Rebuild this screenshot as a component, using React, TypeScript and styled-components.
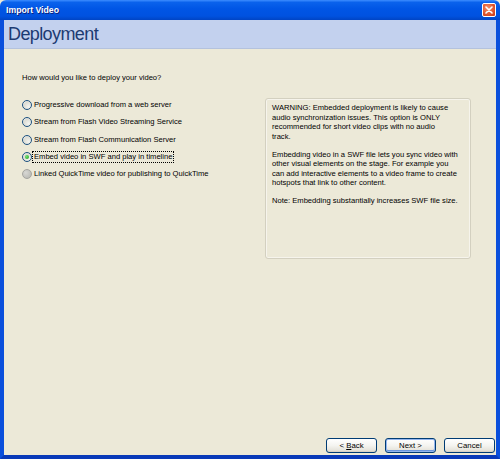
import * as React from 'react'
import styled, { createGlobalStyle } from 'styled-components'

const GlobalStyle = createGlobalStyle`
  html, body {
    margin: 0;
    padding: 0;
    background: #ece9d8;
  }
`

const uiFont = `'Liberation Sans', Arial, sans-serif`

const Window = styled.div`
  width: 500px;
  height: 459px;
  display: flex;
  flex-direction: column;
  font-family: ${uiFont};
  font-size: 7.6px;
  color: #000;
  overflow: hidden;
`

const TitleBar = styled.div`
  height: 20px;
  flex: 0 0 20px;
  display: flex;
  align-items: center;
  justify-content: space-between;
  padding: 0 4px 0 6px;
  background: linear-gradient(
    #3d8dff 0,
    #0a62ec 12%,
    #0055e5 45%,
    #0052e0 80%,
    #0044c4 100%
  );
  border-radius: 6px 6px 0 0;
`

const Title = styled.span`
  color: #fff;
  font-family: ${uiFont};
  font-weight: bold;
  font-size: 8.7px;
  text-shadow: 1px 1px 0 #0a1f7a;
`

const CloseButton = styled.div`
  width: 14px;
  height: 14px;
  border: 1px solid #fff;
  border-radius: 2px;
  background: radial-gradient(circle at 40% 35%, #f2906c, #e0542b 60%, #c2381a);
  display: flex;
  align-items: center;
  justify-content: center;
  box-sizing: border-box;
`

const Frame = styled.div`
  flex: 1;
  display: flex;
  flex-direction: column;
  border-left: 4px solid #0a4fdc;
  border-right: 4px solid #0a4fdc;
  border-bottom: 4px solid #0839b8;
`

const Header = styled.div`
  height: 28px;
  flex: 0 0 28px;
  display: flex;
  align-items: center;
  padding-left: 4px;
  background: #c3d1ee;
  border-bottom: 1px solid #b4c2dd;
`

const HeaderTitle = styled.h1`
  margin: 0;
  font-family: ${uiFont};
  font-weight: normal;
  font-size: 18px;
  letter-spacing: -0.6px;
  color: #1d3b72;
`

const Body = styled.div`
  flex: 1;
  display: flex;
  flex-direction: column;
  background: #ece9d8;
  padding: 24px 1px 2px 18px;
`

const Question = styled.p`
  margin: 0 0 15px 0;
  line-height: 10px;
`

const Content = styled.div`
  flex: 1;
  display: flex;
  align-items: flex-start;
`

const OptionList = styled.div`
  width: 243px;
  display: flex;
  flex-direction: column;
  gap: 7.3px;
  padding-top: 2px;
`

const Option = styled.label`
  display: flex;
  align-items: center;
  gap: 1px;
  height: 10px;
  line-height: 10px;
  white-space: nowrap;
`

const RadioCircle = styled.span<{ $disabled?: boolean }>`
  width: 10px;
  height: 10px;
  flex: 0 0 10px;
  box-sizing: border-box;
  border-radius: 50%;
  border: 1px solid ${p => (p.$disabled ? '#a5a5a0' : '#1c5180')};
  background: ${p =>
    p.$disabled
      ? 'radial-gradient(circle at 35% 35%, #d8d8d4, #b4b4ae)'
      : 'radial-gradient(circle at 70% 70%, #f4f4f0, #dcdcd4 60%, #ffffff)'};
  display: flex;
  align-items: center;
  justify-content: center;
`

const RadioDot = styled.span`
  width: 4px;
  height: 4px;
  border-radius: 50%;
  background: radial-gradient(circle at 35% 35%, #6fe06f, #21a121);
`

const OptionText = styled.span<{ $focused?: boolean }>`
  padding: 0 1px;
  outline: ${p => (p.$focused ? '1px dotted #000' : 'none')};
  outline-offset: 0;
`

const InfoBox = styled.div`
  width: 206px;
  height: 161px;
  box-sizing: border-box;
  padding: 4px 6px;
  border: 1px solid #d3d0c0;
  border-radius: 3px;
  box-shadow: inset 0 0 0 1px #f6f4ec;
`

const InfoParagraph = styled.p`
  margin: 0 0 8.7px 0;
  line-height: 9.5px;
`

const InfoLine = styled.span`
  display: block;
  white-space: nowrap;
`

const ButtonRow = styled.div`
  display: flex;
  justify-content: flex-end;
  gap: 8px;
`

const Button = styled.button<{ $default?: boolean }>`
  width: 51px;
  height: 15px;
  padding: 0;
  font-family: ${uiFont};
  font-size: 7.8px;
  color: #000;
  border: 1px solid #003c74;
  border-radius: 3px;
  background: linear-gradient(#ffffff 0, #f4f4f0 50%, #e6e4dc 85%, #d6d0c5 100%);
  box-shadow: ${p =>
    p.$default
      ? 'inset 0 0 0 1px #94b6ee, inset 0 -1px 0 1px #6b96dc'
      : 'inset 0 -1px 0 #d8d2c6'};
`

const Mnemonic = styled.span`
  text-decoration: underline;
`

const options = [
  { label: 'Progressive download from a web server' },
  { label: 'Stream from Flash Video Streaming Service' },
  { label: 'Stream from Flash Communication Server' },
  { label: 'Embed video in SWF and play in timeline', checked: true },
  { label: 'Linked QuickTime video for publishing to QuickTime', disabled: true },
]

const infoParagraphs = [
  [
    'WARNING: Embedded deployment is likely to cause',
    'audio synchronization issues. This option is ONLY',
    'recommended for short video clips with no audio',
    'track.',
  ],
  [
    'Embedding video in a SWF file lets you sync video with',
    'other visual elements on the stage. For example you',
    'can add interactive elements to a video frame to create',
    'hotspots that link to other content.',
  ],
  ['Note: Embedding substantially increases SWF file size.'],
]

const App: React.FC = () => (
  <>
    <GlobalStyle />
    <Window>
      <TitleBar>
        <Title>Import Video</Title>
        <CloseButton>
          <svg width="8" height="8" viewBox="0 0 8 8">
            <path d="M1 1 L7 7 M7 1 L1 7" stroke="#fff" strokeWidth="1.6" strokeLinecap="round" />
          </svg>
        </CloseButton>
      </TitleBar>
      <Frame>
        <Header>
          <HeaderTitle>Deployment</HeaderTitle>
        </Header>
        <Body>
          <Question>How would you like to deploy your video?</Question>
          <Content>
            <OptionList>
              {options.map(o => (
                <Option key={o.label}>
                  <RadioCircle $disabled={o.disabled}>{o.checked && <RadioDot />}</RadioCircle>
                  <OptionText $focused={o.checked}>{o.label}</OptionText>
                </Option>
              ))}
            </OptionList>
            <InfoBox>
              {infoParagraphs.map((lines, i) => (
                <InfoParagraph key={i}>
                  {lines.map(line => (
                    <InfoLine key={line}>{line}</InfoLine>
                  ))}
                </InfoParagraph>
              ))}
            </InfoBox>
          </Content>
          <ButtonRow>
            <Button>
              &lt; <Mnemonic>B</Mnemonic>ack
            </Button>
            <Button $default>Next &gt;</Button>
            <Button>Cancel</Button>
          </ButtonRow>
        </Body>
      </Frame>
    </Window>
  </>
)

export default App
